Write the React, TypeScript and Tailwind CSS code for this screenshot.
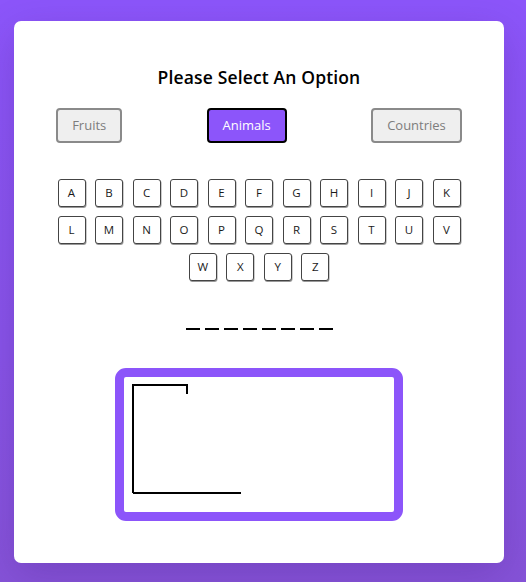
import React, { useState } from 'react';

const LETTERS = 'ABCDEFGHIJKLMNOPQRSTUVWXYZ'.split('');
const OPTIONS = ['Fruits', 'Animals', 'Countries'];

const App: React.FC = () => {
  const [selected, setSelected] = useState('Animals');
  const wordLength = 8;

  return (
    <div
      className="min-h-screen w-full bg-[linear-gradient(180deg,#8c55fa_0%,#8954e8_60%,#8653d8_100%)] pt-[21px] pb-[19px]"
      style={{ fontFamily: '"Open Sans", "Noto Sans", sans-serif' }}
    >
      <div className="ml-[14px] w-[490px] h-[542px] rounded-[7px] bg-white shadow-[0_12px_40px_rgba(40,0,90,0.18)] flex flex-col items-center pt-[45px]">
        {/* Title */}
        <h2 className="text-[17.5px] leading-[22px] font-semibold text-black tracking-[0.15px]">
          Please Select An Option
        </h2>

        {/* Category options */}
        <div className="mt-[20px] w-full flex justify-around">
          {OPTIONS.map((opt) => (
            <button
              key={opt}
              onClick={() => setSelected(opt)}
              className={`h-[35px] px-[14px] rounded-[4px] border-2 text-[13px] ${
                selected === opt
                  ? 'bg-[#8c55fa] border-black text-white'
                  : 'bg-[#efefef] border-[#8a8a8a] text-[#7d7d7d]'
              }`}
            >
              {opt}
            </button>
          ))}
        </div>

        {/* Letters */}
        <div className="mt-[36px] w-[404px] flex flex-wrap justify-center gap-x-[9.5px] gap-y-[9px]">
          {LETTERS.map((l) => (
            <button
              key={l}
              className="w-[28px] h-[28px] rounded-[3px] border border-[#444] bg-white shadow-[0.5px_1px_0_#999] text-[11.5px] text-[#1a1a1a] flex items-center justify-center"
            >
              {l}
            </button>
          ))}
        </div>

        {/* Word blanks */}
        <div className="mt-[47px] flex gap-[5px]">
          {Array.from({ length: wordLength }).map((_, i) => (
            <div key={i} className="w-[14px] h-[2px] bg-black" />
          ))}
        </div>

        {/* Hangman canvas */}
        <div className="mt-[38px] border-[9px] border-[#8c55fa] rounded-[11px] bg-white">
          <svg width="270" height="135" viewBox="0 0 270 135" className="block">
            <path
              d="M9 116 H117 M9 116 V8 H63 V17"
              fill="none"
              stroke="#000"
              strokeWidth="2"
              strokeLinejoin="miter"
            />
          </svg>
        </div>
      </div>
    </div>
  );
};

export default App;
